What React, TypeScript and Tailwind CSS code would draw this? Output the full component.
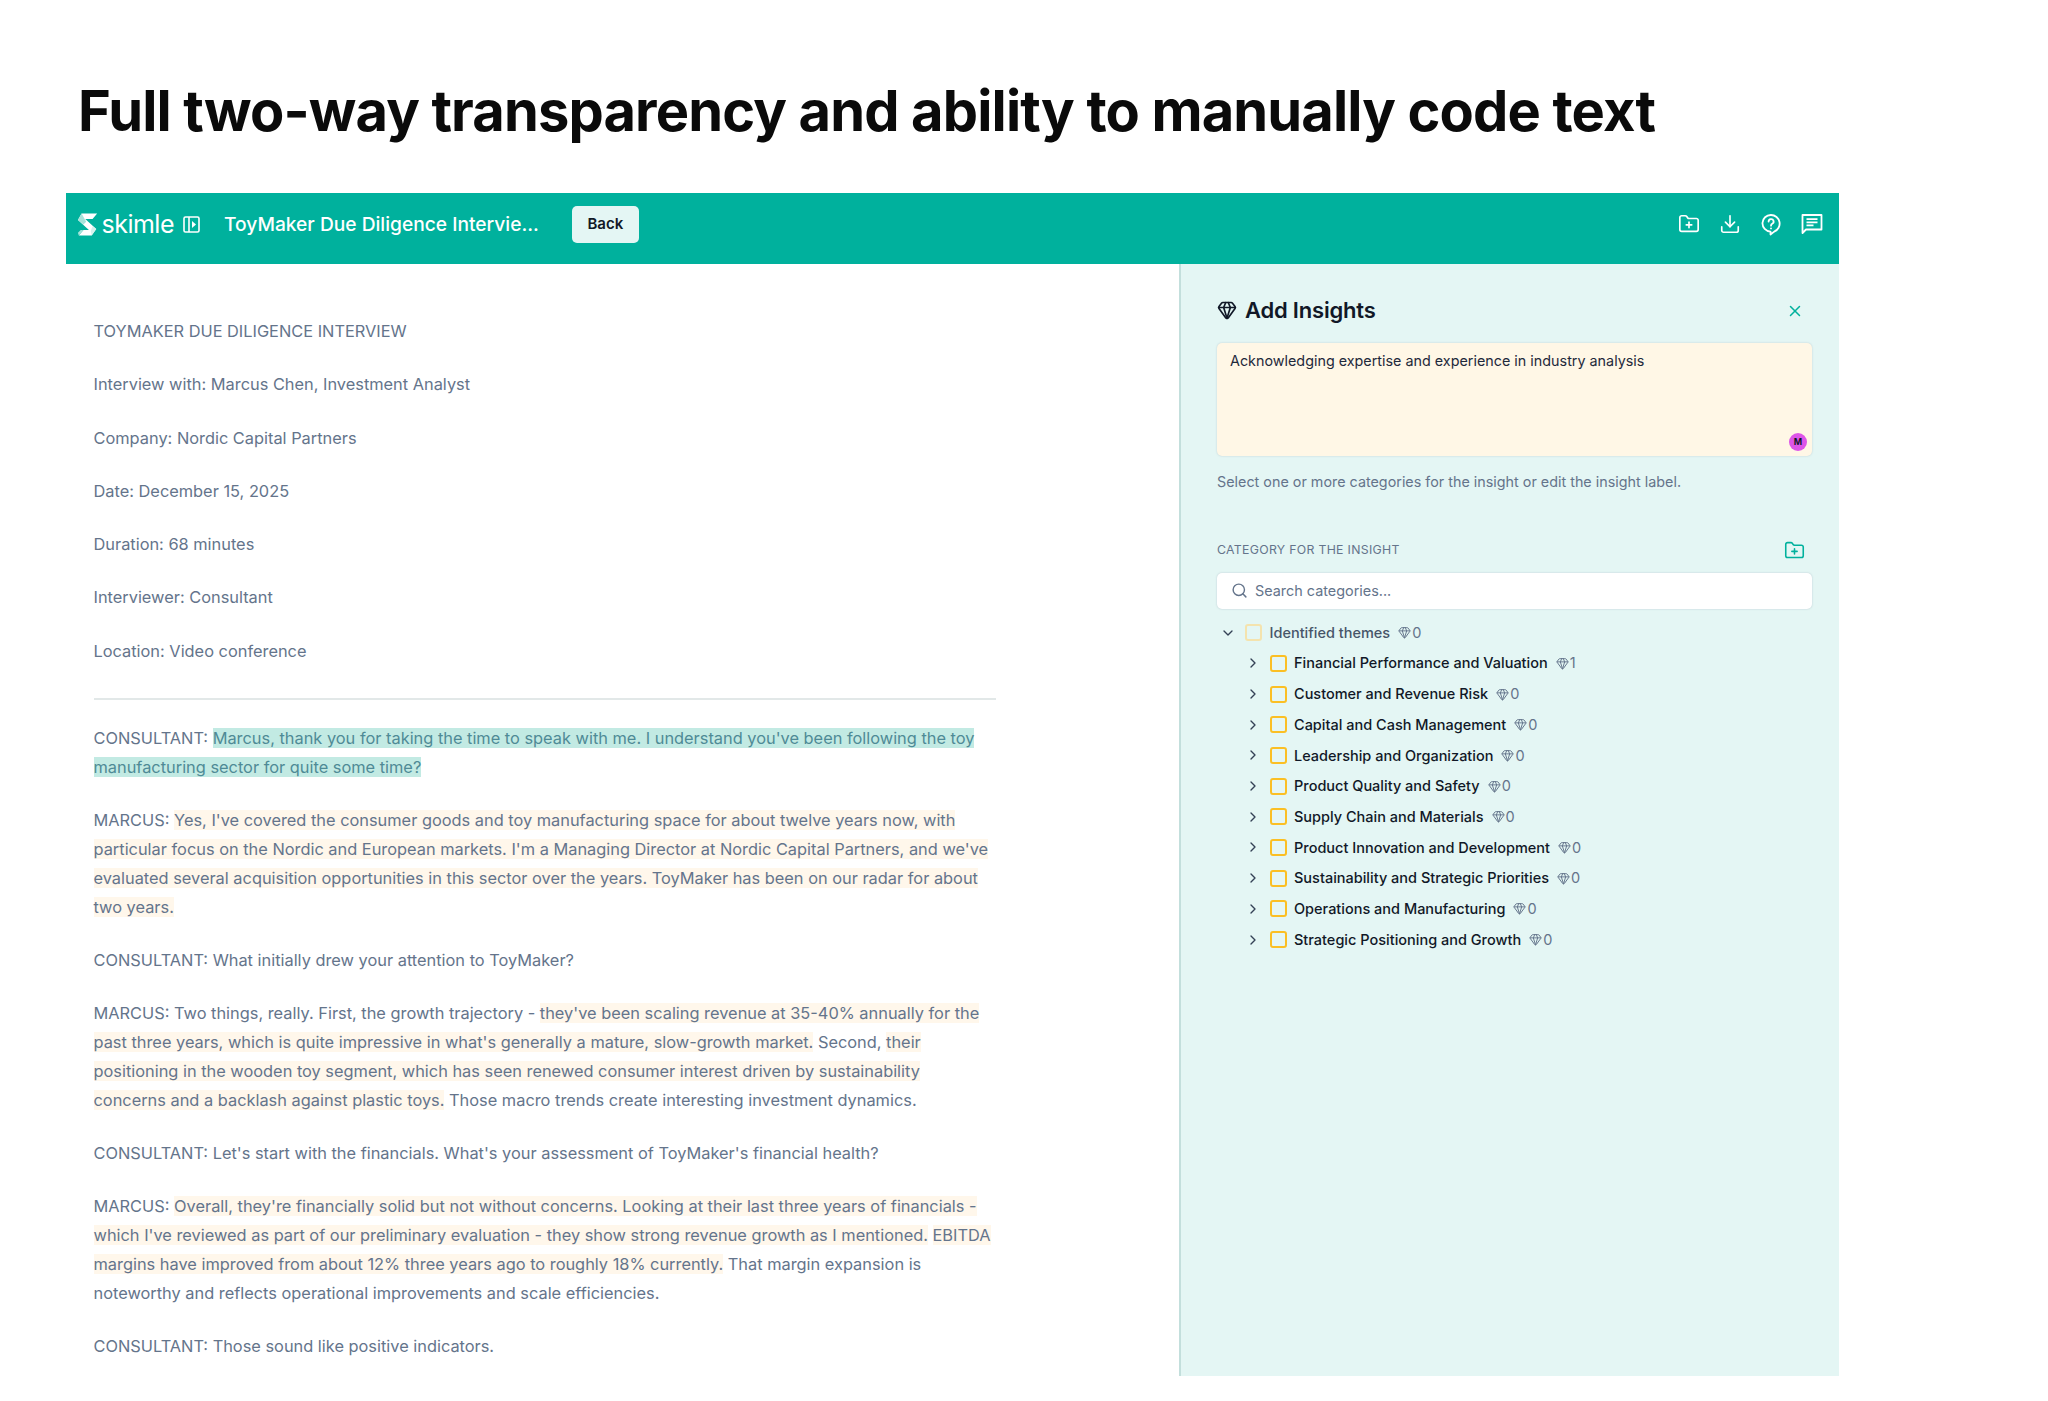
import {
  ChevronDown,
  ChevronRight,
  Download,
  FolderPlus,
  Gem,
  Search,
  X,
} from "lucide-react";

const themes = [
  { name: "Financial Performance and Valuation", count: 1 },
  { name: "Customer and Revenue Risk", count: 0 },
  { name: "Capital and Cash Management", count: 0 },
  { name: "Leadership and Organization", count: 0 },
  { name: "Product Quality and Safety", count: 0 },
  { name: "Supply Chain and Materials", count: 0 },
  { name: "Product Innovation and Development", count: 0 },
  { name: "Sustainability and Strategic Priorities", count: 0 },
  { name: "Operations and Manufacturing", count: 0 },
  { name: "Strategic Positioning and Growth", count: 0 },
];

const meta = [
  "TOYMAKER DUE DILIGENCE INTERVIEW",
  "Interview with: Marcus Chen, Investment Analyst",
  "Company: Nordic Capital Partners",
  "Date: December 15, 2025",
  "Duration: 68 minutes",
  "Interviewer: Consultant",
  "Location: Video conference",
];

function Logo() {
  return (
    <svg width="22" height="25" viewBox="0 0 24 26">
      <path d="M5 1h17l-5 6H9l12 11-5 7H2l5-6h6L1 8z" fill="#ffffff" />
      <path d="M1 8l6 5 3-3L5 1z" fill="#a7e3da" />
      <path d="M2 25l5-6H4l-3 3z" fill="#a7e3da" />
      <path d="M16 25l5-7-4-3-2 5z" fill="#d5f2ee" />
    </svg>
  );
}

function SidebarToggle() {
  return (
    <svg width="17" height="17" viewBox="0 0 17 17" fill="none" stroke="white" strokeWidth="1.6">
      <rect x="1" y="1" width="15" height="15" rx="1.5" />
      <path d="M6 1v15" />
      <path d="M9 5l4 3.5-4 3.5z" fill="white" stroke="none" />
    </svg>
  );
}

function HelpBubble() {
  return (
    <svg width="22" height="23" viewBox="0 0 22 23" fill="none" stroke="white" strokeWidth="1.8" strokeLinecap="round" strokeLinejoin="round">
      <path d="M11 2a8.6 8.6 0 0 1 3.2 16.6L10.5 21.5v-2.9A8.3 8.3 0 0 1 11 2z" />
      <path d="M8.6 8.5a2.5 2.5 0 1 1 3.6 2.3c-.8.4-1.2.9-1.2 1.9" />
      <path d="M11 15.3v.1" />
    </svg>
  );
}

function ChatLines() {
  return (
    <svg width="22" height="22" viewBox="0 0 22 22" fill="none" stroke="white" strokeWidth="1.8" strokeLinejoin="round">
      <path d="M1.5 2h19v14.500H5L1.500 20z" />
      <path d="M5.500 6.200h11M5.500 9.300h11M5.500 12.400h7" />
    </svg>
  );
}

function Hl({ children }: { children: React.ReactNode }) {
  return <span className="bg-[#fff7eb]">{children}</span>;
}

function Para({ children }: { children: React.ReactNode }) {
  return <p className="mb-[24.5px]">{children}</p>;
}

export default function App() {
  return (
    <div className="h-[1401px] w-[2048px] overflow-hidden bg-white font-['Inter',sans-serif]">
      {/* Page title */}
      <h1 className="pl-[78px] pt-[77px] text-[56px] font-bold leading-[68px] tracking-[-0.85px] text-[#0a0a0a]">
        Full two-way transparency and ability to manually code text
      </h1>

      <div className="ml-[66px] mt-[48px] flex h-[1183px] w-[1773px] flex-col overflow-hidden">
        {/* Top bar */}
        <header className="flex h-[71px] shrink-0 items-center justify-between bg-[#00b19d] pb-[9px] pl-[11px] pr-[16px] text-white">
          <div className="flex items-center">
            <Logo />
            <span className="ml-[2.5px] text-[25px] font-normal leading-none tracking-[-0.5px]">skimle</span>
            <span className="ml-[9px]">
              <SidebarToggle />
            </span>
            <span className="ml-[24px] text-[19.2px] font-medium">ToyMaker Due Diligence Intervie...</span>
            <button className="ml-[33px] h-[37px] w-[67px] rounded-[5px] bg-[#e4f6f4] text-[15px] font-semibold text-[#111827]">
              Back
            </button>
          </div>
          <div className="flex items-center gap-[19px]">
            <FolderPlus size={22} strokeWidth={1.8} />
            <Download size={22} strokeWidth={1.8} />
            <HelpBubble />
            <ChatLines />
          </div>
        </header>

        <div className="flex min-h-0 flex-1">
          {/* Document */}
          <main className="w-[1113px] shrink-0 overflow-hidden pl-[27.5px] pt-[53px] text-[16.37px] leading-[28.8px] text-[#64748b]">
            <div className="w-[902px]">
              {meta.map((line) => (
                <Para key={line}>{line}</Para>
              ))}
              <hr className="mb-[24px] mt-[32.5px] border-t-2 border-[#e2e8e8]" />
              <Para>
                CONSULTANT:{" "}
                <span className="bg-[#c2eae3] text-[#4f8a96]">
                  Marcus, thank you for taking the time to speak with me. I understand you've been following the toy
                  manufacturing sector for quite some time?
                </span>
              </Para>
              <Para>
                MARCUS:{" "}
                <Hl>
                  Yes, I've covered the consumer goods and toy manufacturing space for about twelve years now, with
                  particular focus on the Nordic and European markets. I'm a Managing Director at Nordic Capital
                  Partners, and we've evaluated several acquisition opportunities in this sector over the years.
                  ToyMaker has been on our radar for about two years.
                </Hl>
              </Para>
              <Para>CONSULTANT: What initially drew your attention to ToyMaker?</Para>
              <Para>
                MARCUS: Two things, really. First, the growth trajectory -{" "}
                <Hl>
                  they've been scaling revenue at 35-40% annually for the past three years, which is quite impressive
                  in what's generally a mature, slow-growth market.
                </Hl>{" "}
                Second,{" "}
                <Hl>
                  their positioning in the wooden toy segment, which has seen renewed consumer interest driven by
                  sustainability concerns and a backlash against plastic toys.
                </Hl>{" "}
                Those macro trends create interesting investment dynamics.
              </Para>
              <Para>CONSULTANT: Let's start with the financials. What's your assessment of ToyMaker's financial health?</Para>
              <Para>
                MARCUS:{" "}
                <Hl>
                  Overall, they're financially solid but not without concerns. Looking at their last three years of
                  financials - which I've reviewed as part of our preliminary evaluation - they show strong revenue
                  growth as I mentioned.
                </Hl>{" "}
                <Hl>EBITDA margins have improved from about 12% three years ago to roughly 18% currently.</Hl> That
                margin expansion is noteworthy and reflects operational improvements and scale efficiencies.
              </Para>
              <Para>CONSULTANT: Those sound like positive indicators.</Para>
            </div>
          </main>

          {/* Add Insights panel */}
          <aside className="flex-1 border-l-2 border-[#c3dfdc] bg-[#e4f6f4] pl-[36px] pr-[27px] pt-[28px]">
            <div className="flex h-[36px] items-center justify-between pr-[8px]">
              <div className="flex items-center gap-[8px] text-[#111827]">
                <Gem size={20} strokeWidth={2} />
                <h2 className="text-[22px] font-semibold leading-none tracking-[-0.2px]">Add Insights</h2>
              </div>
              <X size={18} strokeWidth={2} className="mt-[2px] text-[#00b19d]" />
            </div>

            <div className="relative mt-[15px] h-[113px] rounded-[5px] bg-[#fff7e6] px-[13px] py-[6px] text-[14.35px] leading-[24px] text-[#1e293b] shadow-[0_0_2px_rgba(100,116,139,0.3)]">
              Acknowledging expertise and experience in industry analysis
              <span className="absolute bottom-[5px] right-[5px] flex h-[18px] w-[18px] items-center justify-center rounded-full bg-[#dd55e8] text-[9px] font-bold text-[#111827]">
                M
              </span>
            </div>

            <p className="mt-[14px] text-[14.35px] leading-[24px] text-[#64748b]">
              Select one or more categories for the insight or edit the insight label.
            </p>

            <div className="mt-[44.5px] flex h-[24px] items-center justify-between pr-[7px]">
              <span className="text-[12.3px] font-normal uppercase tracking-[0.3px] text-[#64748b]">
                Category for the insight
              </span>
              <FolderPlus size={21} strokeWidth={1.8} className="text-[#00b19d]" />
            </div>

            <div className="mt-[10px] flex h-[36px] items-center gap-[7px] rounded-[5px] bg-white px-[14px] text-[14.4px] text-[#64748b] shadow-[0_0_2px_rgba(100,116,139,0.35)]">
              <Search size={17} strokeWidth={2} />
              Search categories...
            </div>

            {/* Category tree */}
            <div className="mt-[8.500px] flex h-[31px] items-center pl-[3px] text-[14.5px] font-medium text-[#475569]">
              <ChevronDown size={16} strokeWidth={2} className="text-[#334155]" />
              <span className="ml-[9px] h-[17px] w-[17px] rounded-[3px] border-2 border-[#f4e3ae]" />
              <span className="ml-[7.500px]">Identified themes</span>
              <span className="ml-[8px] flex items-center gap-[1px] font-normal text-[#64748b]">
                <Gem size={13} strokeWidth={1.8} />0
              </span>
            </div>
            {themes.map((t) => (
              <div key={t.name} className="flex h-[30.7px] items-center pl-[28px] text-[14.5px] font-medium text-[#111827]">
                <ChevronRight size={16} strokeWidth={2} className="text-[#334155]" />
                <span className="ml-[9px] h-[17px] w-[17px] rounded-[3px] border-2 border-[#fbbf24]" />
                <span className="ml-[7px]">{t.name}</span>
                <span className="ml-[8px] flex items-center gap-[1px] font-normal text-[#64748b]">
                  <Gem size={13} strokeWidth={1.8} />
                  {t.count}
                </span>
              </div>
            ))}
          </aside>
        </div>
      </div>
    </div>
  );
}
